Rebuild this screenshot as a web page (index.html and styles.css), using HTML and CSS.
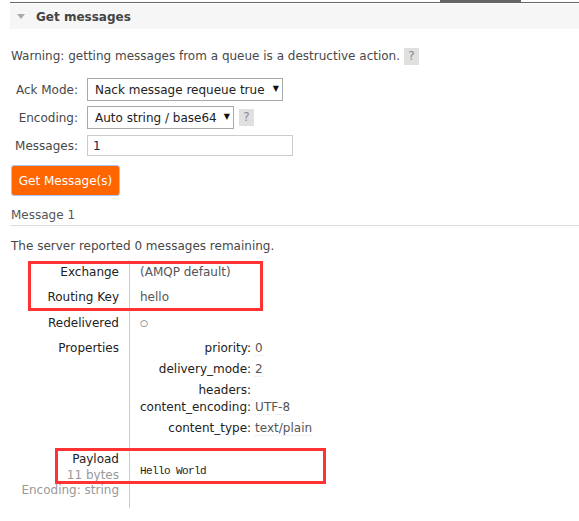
FILE: index.html
```html
<!DOCTYPE html>
<html lang="en">
<head>
    <meta charset="UTF-8">
    <title>Get messages</title>
    <link rel="stylesheet" href="styles.css">
</head>
<body>
    <div class="tabs"><span class="tab-active"></span></div>

    <div class="section">
        <h2 class="section-title"><span class="arrow"></span>Get messages</h2>

        <p class="warning">Warning: getting messages from a queue is a destructive action. <span class="help">?</span></p>

        <form class="get-form">
            <div class="form-row">
                <label for="ackmode">Ack Mode:</label>
                <span class="select-wrap wide">
                    <select id="ackmode">
                        <option>Nack message requeue true</option>
                    </select>
                    <span class="caret">&#9660;</span>
                </span>
            </div>
            <div class="form-row">
                <label for="encoding">Encoding:</label>
                <span class="select-wrap">
                    <select id="encoding">
                        <option>Auto string / base64</option>
                    </select>
                    <span class="caret">&#9660;</span>
                </span>
                <span class="help">?</span>
            </div>
            <div class="form-row last">
                <label for="count">Messages:</label>
                <input type="text" id="count" value="1">
            </div>
            <button type="button" class="btn-get">Get Message(s)</button>
        </form>

        <h3 class="msg-title">Message 1</h3>
        <p class="remaining">The server reported 0 messages remaining.</p>

        <div class="msg-wrap">
            <table class="facts">
                <tr>
                    <th>Exchange</th>
                    <td>(AMQP default)</td>
                </tr>
                <tr>
                    <th>Routing Key</th>
                    <td>hello</td>
                </tr>
                <tr class="redeliv">
                    <th>Redelivered</th>
                    <td><span class="dot">&#9675;</span></td>
                </tr>
                <tr>
                    <th>Properties</th>
                    <td>
                        <table class="props">
                            <tr><th>priority:</th><td><span class="val">0</span></td></tr>
                            <tr><th>delivery_mode:</th><td><span class="val">2</span></td></tr>
                            <tr class="empty"><th>headers:</th><td></td></tr>
                            <tr><th>content_encoding:</th><td><span class="val">UTF-8</span></td></tr>
                            <tr><th>content_type:</th><td><span class="val">text/plain</span></td></tr>
                        </table>
                    </td>
                </tr>
                <tr class="payload">
                    <th>Payload<br><span class="sub">11 bytes</span><br><span class="sub">Encoding: string</span></th>
                    <td><pre>Hello World</pre></td>
                </tr>
            </table>

            <!-- annotation boxes -->
            <div class="mark mark-route"></div>
            <div class="mark mark-payload"></div>
        </div>
    </div>
</body>
</html>
```

FILE: styles.css
```css
body {
    margin: 0;
    font-family: "DejaVu Sans", Verdana, sans-serif;
    font-size: 12px;
    color: #484848;
    background: #fff;
}

.tabs {
    height: 2px;
    margin-left: 10px;
    border-bottom: 1px solid #666;
    display: flex;
}

.tab-active {
    width: 81px;
    height: 2px;
    margin-left: 430px;
    background: #666;
}

.section {
    padding-left: 10px;
}

.section-title {
    margin: 1px 0 0;
    height: 25px;
    background: #f6f6f6;
    display: flex;
    align-items: center;
    font-size: 12px;
    color: #444;
}

.arrow {
    width: 0;
    height: 0;
    margin: 0 11px 0 7px;
    border-left: 4px solid transparent;
    border-right: 4px solid transparent;
    border-top: 5px solid #aaa;
}

.warning {
    margin: 18px 0 0 1px;
    line-height: 18px;
}

.help {
    display: inline-block;
    width: 15px;
    height: 17px;
    line-height: 17px;
    text-align: center;
    background: #e0e0e0;
    color: #888;
    vertical-align: middle;
}

.get-form {
    margin-top: 13px;
}

.form-row {
    display: flex;
    align-items: center;
    margin-bottom: 5px;
}

.form-row.last {
    margin-top: 6px;
}

.form-row label {
    width: 68px;
    padding-right: 9px;
    text-align: right;
    color: #484848;
}

.select-wrap {
    position: relative;
    display: inline-block;
}

.select-wrap select {
    -webkit-appearance: none;
    appearance: none;
    width: 147px;
    height: 23px;
    padding: 0 0 0 7px;
    border: 1px solid #a9a9a9;
    border-radius: 0;
    background: #fff;
    font-family: inherit;
    font-size: 12px;
    color: #222;
}

.select-wrap.wide select {
    width: 196px;
}

.caret {
    position: absolute;
    right: 4px;
    top: 6px;
    font-size: 8px;
    color: #111;
    pointer-events: none;
}

.form-row .help {
    margin-left: 5px;
}

.form-row input {
    width: 206px;
    height: 21px;
    box-sizing: border-box;
    padding: 0 5px;
    border: 1px solid #ccc;
    font-family: inherit;
    font-size: 12px;
    color: #224;
}

.btn-get {
    margin: 4px 0 0 1px;
    width: 109px;
    height: 31px;
    border: 1px solid #a8c4f0;
    border-radius: 3px;
    background: #f60;
    color: #fff;
    font-family: inherit;
    font-size: 12px;
    cursor: pointer;
}

.msg-title {
    margin: 12px 0 0;
    padding: 0 0 3px 1px;
    border-bottom: 1px solid #ddd;
    font-size: 12px;
    font-weight: normal;
    color: #555;
}

.remaining {
    margin: 13px 0 0 1px;
}

.msg-wrap {
    position: relative;
    margin-top: 7px;
}

.facts {
    border-spacing: 0;
    border-collapse: separate;
}

.facts > tbody > tr > th {
    width: 108px;
    padding: 5px 10px 5px 1px;
    text-align: right;
    vertical-align: top;
    font-weight: normal;
    line-height: 15px;
    color: #222;
}

.facts > tbody > tr > td {
    padding: 5px 10px;
    border-left: 1px solid #ccc;
    vertical-align: top;
    line-height: 15px;
    color: #555;
}

.facts > tbody > tr.redeliv > th {
    padding-top: 6px;
}

.dot {
    font-size: 9px;
}

.props {
    border-spacing: 0;
}

.props th {
    width: 108px;
    padding: 0 4px 6px 0;
    text-align: right;
    font-weight: normal;
    color: #222;
    line-height: 15px;
}

.props td {
    padding: 0 0 6px 0;
    line-height: 15px;
}

.props tr.empty th,
.props tr.empty td {
    padding-bottom: 2px;
}

.props .val {
    border-bottom: 1px dotted #e6e6e6;
}

.facts tr.payload > th {
    padding-top: 5px;
    padding-bottom: 9px;
    line-height: 15.5px;
}

.sub {
    color: #999;
}

.payload pre {
    margin: 12px 0 0;
    font-family: "Liberation Mono", monospace;
    font-size: 11px;
    letter-spacing: -0.6px;
    color: #222;
}

.mark {
    position: absolute;
    border: 3px solid #f33;
}

.mark-route {
    left: 18px;
    top: 1px;
    width: 229px;
    height: 44px;
}

.mark-payload {
    left: 45px;
    top: 188px;
    width: 265px;
    height: 30px;
}
```
